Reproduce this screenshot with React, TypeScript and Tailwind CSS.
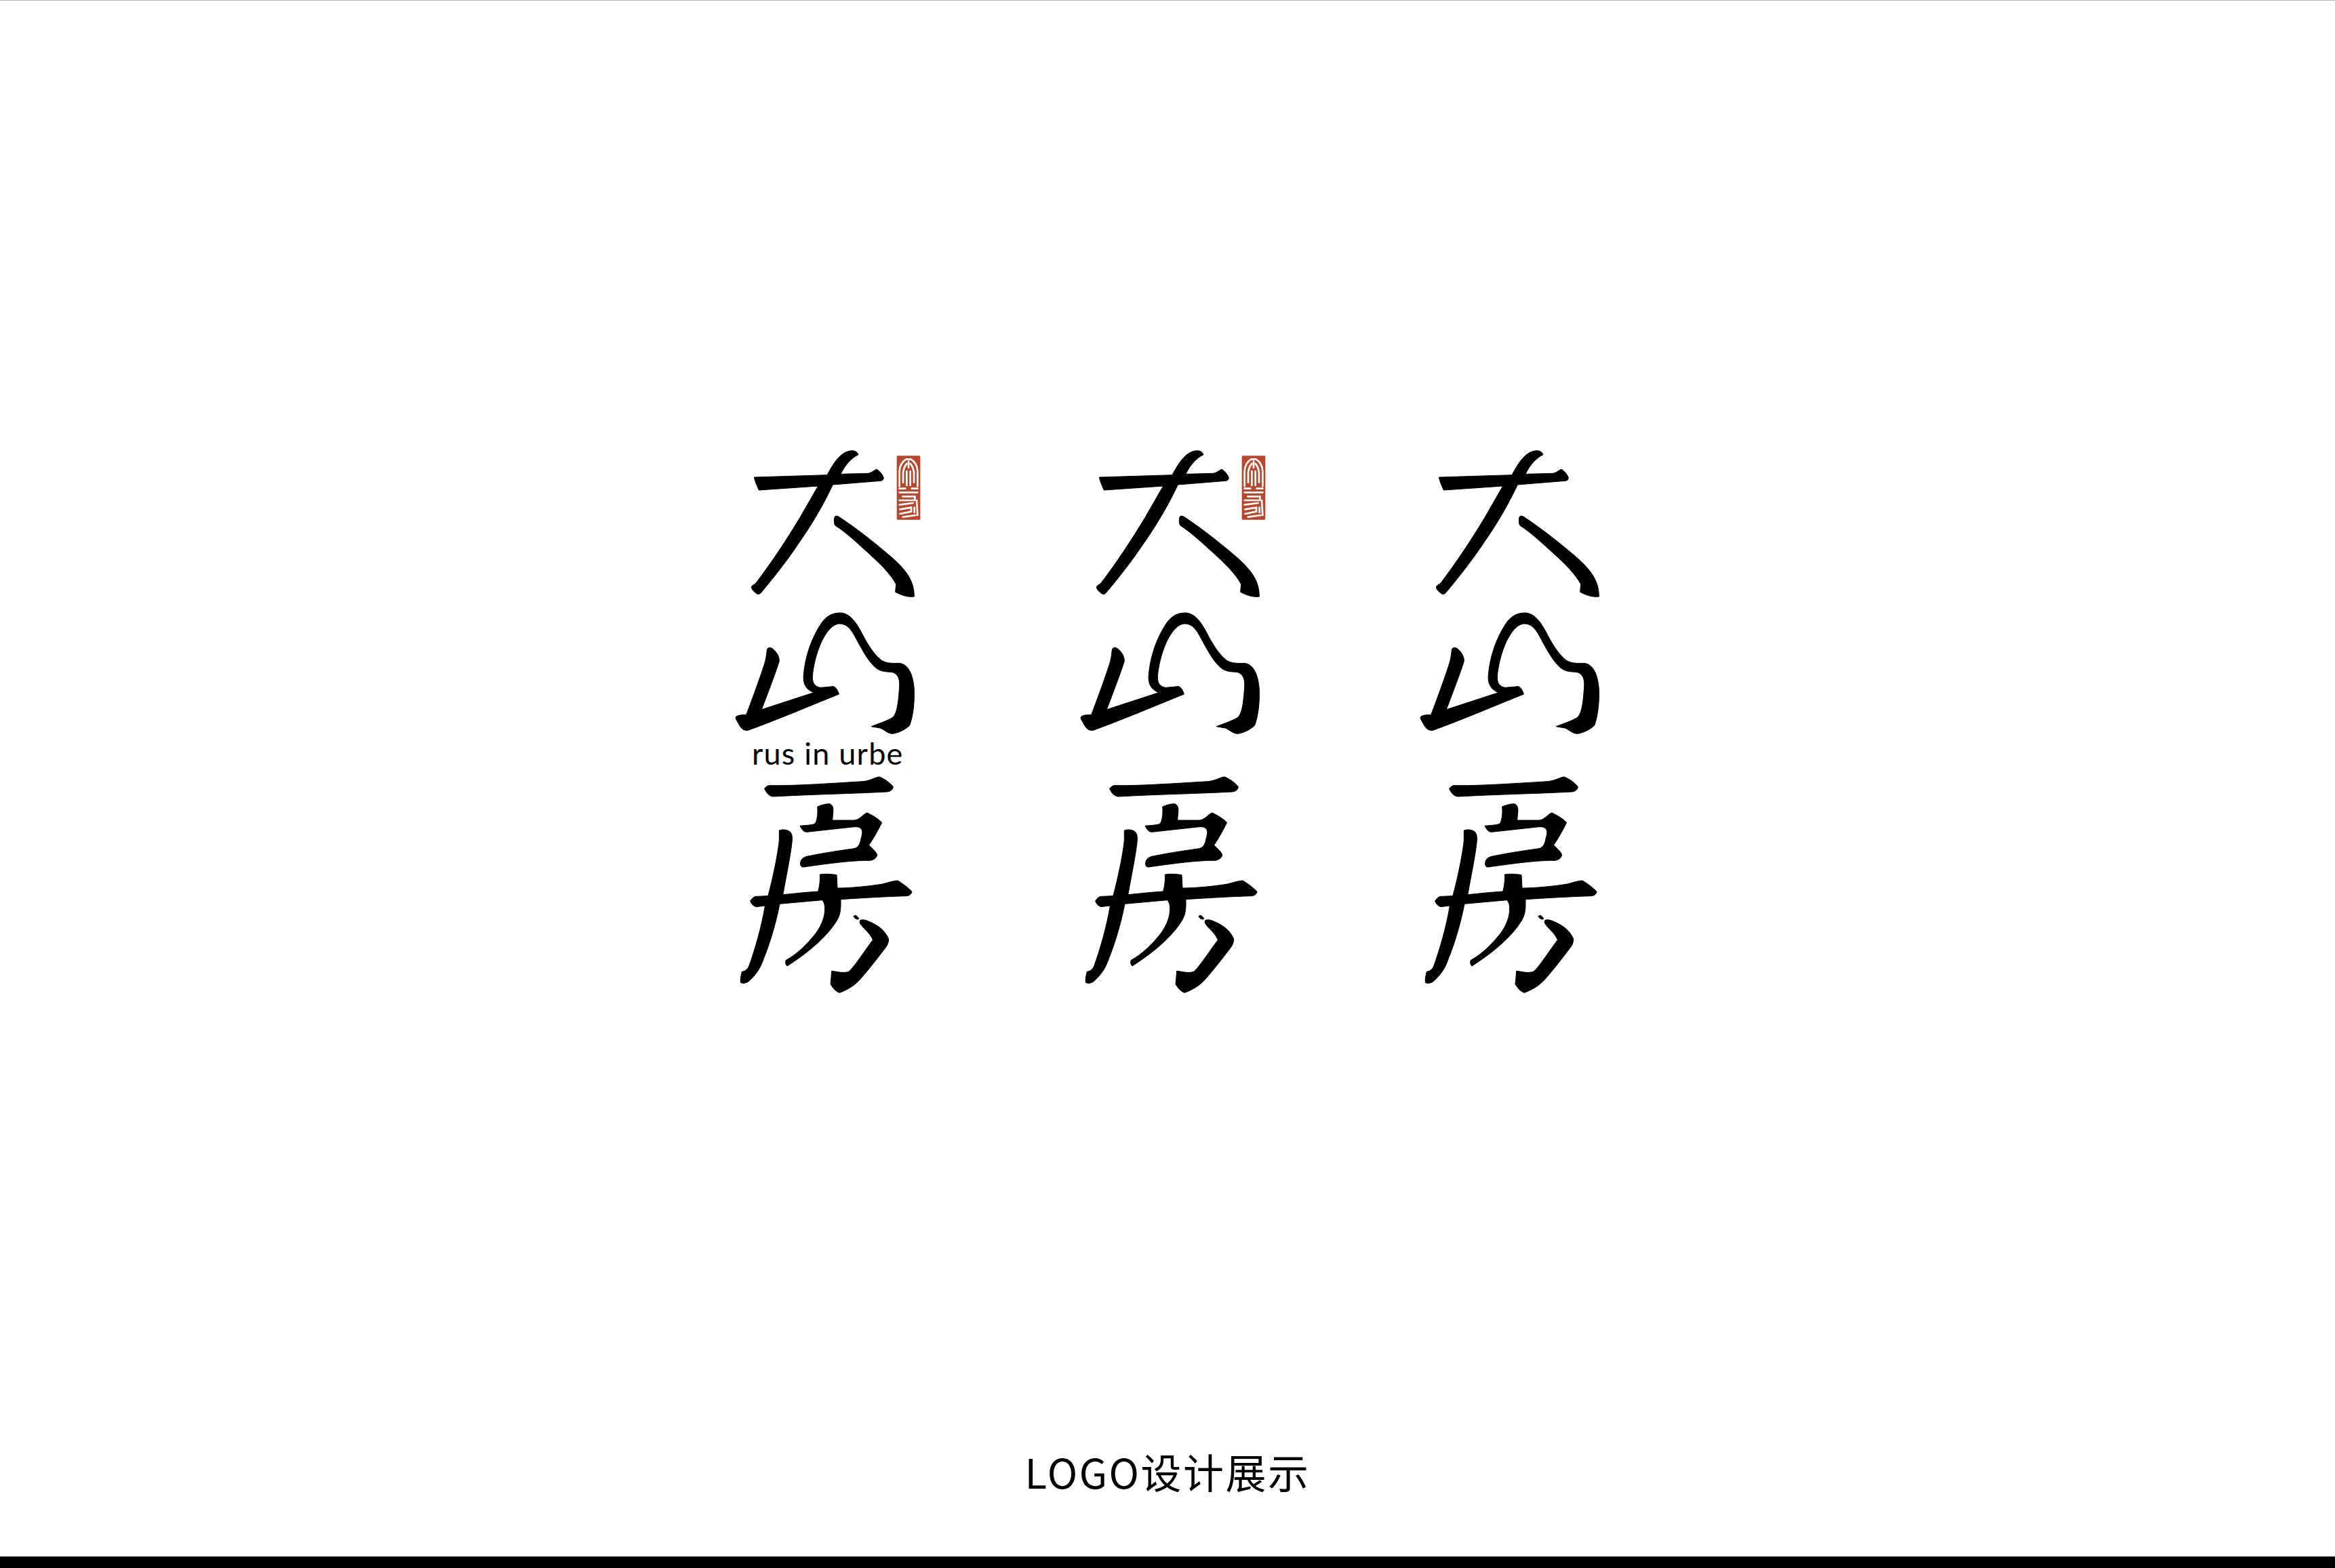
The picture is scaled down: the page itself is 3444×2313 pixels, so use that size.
const DA_H =
  'M157 192 L480 182 C500 145 530 90 570 78 C590 72 610 72 618 92 C590 105 560 135 540 178 L660 175 C680 172 690 158 700 157 C712 165 726 180 730 195 C728 205 724 207 715 208 L505 225 C470 300 420 390 350 490 C300 565 240 640 190 700 C182 710 176 711 170 708 C158 700 146 690 145 678 C148 668 158 668 165 660 C230 575 300 470 360 370 L440 231 L178 249 C170 230 160 210 157 192 Z';
const DA_NA =
  'M513 368 C517 362 525 362 532 367 C620 425 700 490 770 550 C830 605 865 650 865 720 C840 724 810 715 782 700 L785 665 C760 620 720 580 660 525 C620 490 570 440 515 405 C510 395 510 380 513 368 Z';

const SHAN_LOW =
  'M215 232 C222 222 232 226 240 232 C255 245 268 262 268 285 C255 330 220 420 190 500 L420 425 L505 398 C515 396 528 415 532 432 C400 485 260 545 130 592 C112 594 100 585 92 570 C85 556 76 545 75 535 C80 525 100 523 122 523 C150 450 190 340 205 290 C212 265 212 245 215 232 Z';
const SHAN_MAIN =
  'M425 436 L420 425 C385 410 372 385 376 345 C382 270 410 180 460 110 C485 80 510 72 540 72 C580 75 605 110 630 155 C655 205 685 255 720 282 C745 298 775 295 800 295 C840 300 860 345 865 410 C867 470 860 530 845 570 C825 590 795 603 770 607 C748 607 735 590 715 582 L675 575 C710 562 750 548 770 535 C790 515 795 470 800 400 C802 365 795 345 770 335 C745 332 720 335 695 315 C665 290 640 245 610 190 C590 150 570 120 535 120 C505 122 480 150 455 200 C432 250 418 310 415 355 C415 385 425 398 450 403 L505 398 L510 410 Z';

const FANG_TOP =
  'M203 100 C210 90 220 84 232 86 C320 88 480 78 640 68 C675 64 695 48 712 48 C735 58 760 75 772 92 C770 105 762 112 745 114 C600 122 420 125 240 135 C222 132 210 118 203 100 Z';
const FANG_HU =
  'M437 180 C455 172 475 167 490 167 C505 172 508 185 506 205 L503 240 L600 240 C625 238 640 212 657 207 C680 218 705 232 722 250 C705 285 685 320 665 350 C680 365 695 378 701 392 C700 408 685 415 670 418 C600 416 480 432 375 447 C366 448 360 440 362 428 C364 412 375 404 390 400 C460 385 530 375 600 365 C618 360 625 345 628 330 C632 310 640 295 632 280 C625 268 610 268 590 270 L390 292 C375 292 368 280 360 265 C385 262 410 262 425 256 C436 245 440 210 437 180 Z';
const FANG_PIE =
  'M268 285 C280 280 300 280 315 290 C325 300 326 315 325 330 C318 400 298 490 285 566 L270 610 C255 690 225 790 200 850 C185 895 165 925 130 955 C118 962 105 963 97 958 C95 940 100 925 103 910 C115 908 125 903 133 888 C160 815 190 710 205 620 C225 560 258 420 268 330 Z';
const FANG_BAR =
  'M140 597 C148 585 158 575 170 577 C260 575 350 560 440 555 C447 530 450 500 448 480 C470 476 500 478 522 482 L525 540 C590 540 680 530 725 522 C750 516 770 508 792 507 C815 520 840 540 855 556 C852 568 845 574 830 575 C730 578 630 584 540 590 C540 620 542 650 525 680 C490 740 420 810 303 885 C296 880 295 870 297 860 C350 830 390 790 430 740 C455 705 470 670 470 630 C470 612 465 600 458 593 L270 610 L165 623 C155 620 143 610 140 597 Z';
const FANG_DOT = 'M597 665 C602 659 608 660 613 666 C618 670 622 676 618 678 C610 679 600 674 597 665 Z';
const FANG_HOOK =
  'M625 684 C632 678 650 680 665 688 C700 702 735 725 752 765 C752 785 745 795 735 808 C700 855 660 905 625 945 C600 972 570 990 535 1003 C518 998 505 982 495 965 C498 945 498 925 500 907 C525 910 550 918 575 910 C600 890 640 825 682 770 C672 740 640 720 625 695 Z';

// Red seal: solid block with pale channels cut through it
function Seal() {
  return (
    <g>
      <rect x="788" y="97" width="104" height="283" rx="4" fill="#b9472c" />
      <g fill="none" stroke="#fff" strokeWidth="8" strokeLinecap="round">
        <path d="M800 232 L800 165 Q802 128 830 112 L850 112 Q878 128 880 165 L880 232" />
        <path d="M816 215 L816 170 Q820 145 832 132 M864 215 L864 170 Q860 145 848 132" />
        <path d="M832 228 L832 165 M848 228 L848 165 M840 122 L840 150" />
        <path d="M800 242 L826 242 M854 242 L880 242" />
        <path d="M800 259 L880 259 M814 277 L868 277 L868 294 L800 294" />
        <path d="M800 314 L860 306 M876 294 L880 360" />
        <path d="M802 334 L852 326 L852 344 L802 354 M815 368 L872 360 M866 326 L866 348" />
      </g>
    </g>
  );
}

function Logo({ seal, motto }: { seal?: boolean; motto?: string }) {
  return (
    <div className="flex w-[320px] flex-col">
      <svg viewBox="0 0 960 1350" className="block h-[450px] w-[320px]" role="img" aria-label="大山">
        <g stroke="#000" strokeWidth="3">
          <path d={DA_H} />
          <path d={DA_NA} />
        </g>
        {seal && <Seal />}
        <g transform="translate(0 720)" stroke="#000" strokeWidth="3">
          <path d={SHAN_LOW} />
          <path d={SHAN_MAIN} />
        </g>
      </svg>
      <div className="flex h-[45px] items-start pl-[49px] font-['Lato',sans-serif] text-[45px] leading-[42px] tracking-[1.2px] text-black">
        {motto}
      </div>
      <svg viewBox="15 15 945 1050" className="ml-[5px] block h-[350px] w-[315px]" role="img" aria-label="房">
        <g stroke="#000" strokeWidth="3">
          <path d={FANG_TOP} />
          <path d={FANG_HU} />
          <path d={FANG_PIE} />
          <path d={FANG_BAR} />
          <path d={FANG_DOT} />
          <path d={FANG_HOOK} />
        </g>
      </svg>
    </div>
  );
}

export default function App() {
  return (
    <div className="flex h-[2313px] w-full flex-col border-t border-[#b5b5b5] bg-white">
      <div className="flex flex-1 items-start pl-[1060px] pt-[639px]">
        <Logo seal motto="rus in urbe" />
        <div className="ml-[189px]">
          <Logo seal />
        </div>
        <div className="ml-[181px]">
          <Logo />
        </div>
      </div>
      <div className="pb-[86px] text-center font-['Noto_Sans_CJK_SC',sans-serif] text-[60px] leading-[80px] tracking-[2.5px] text-black">
        LOGO设计展示
      </div>
      <div className="h-[17px] bg-black" />
    </div>
  );
}
